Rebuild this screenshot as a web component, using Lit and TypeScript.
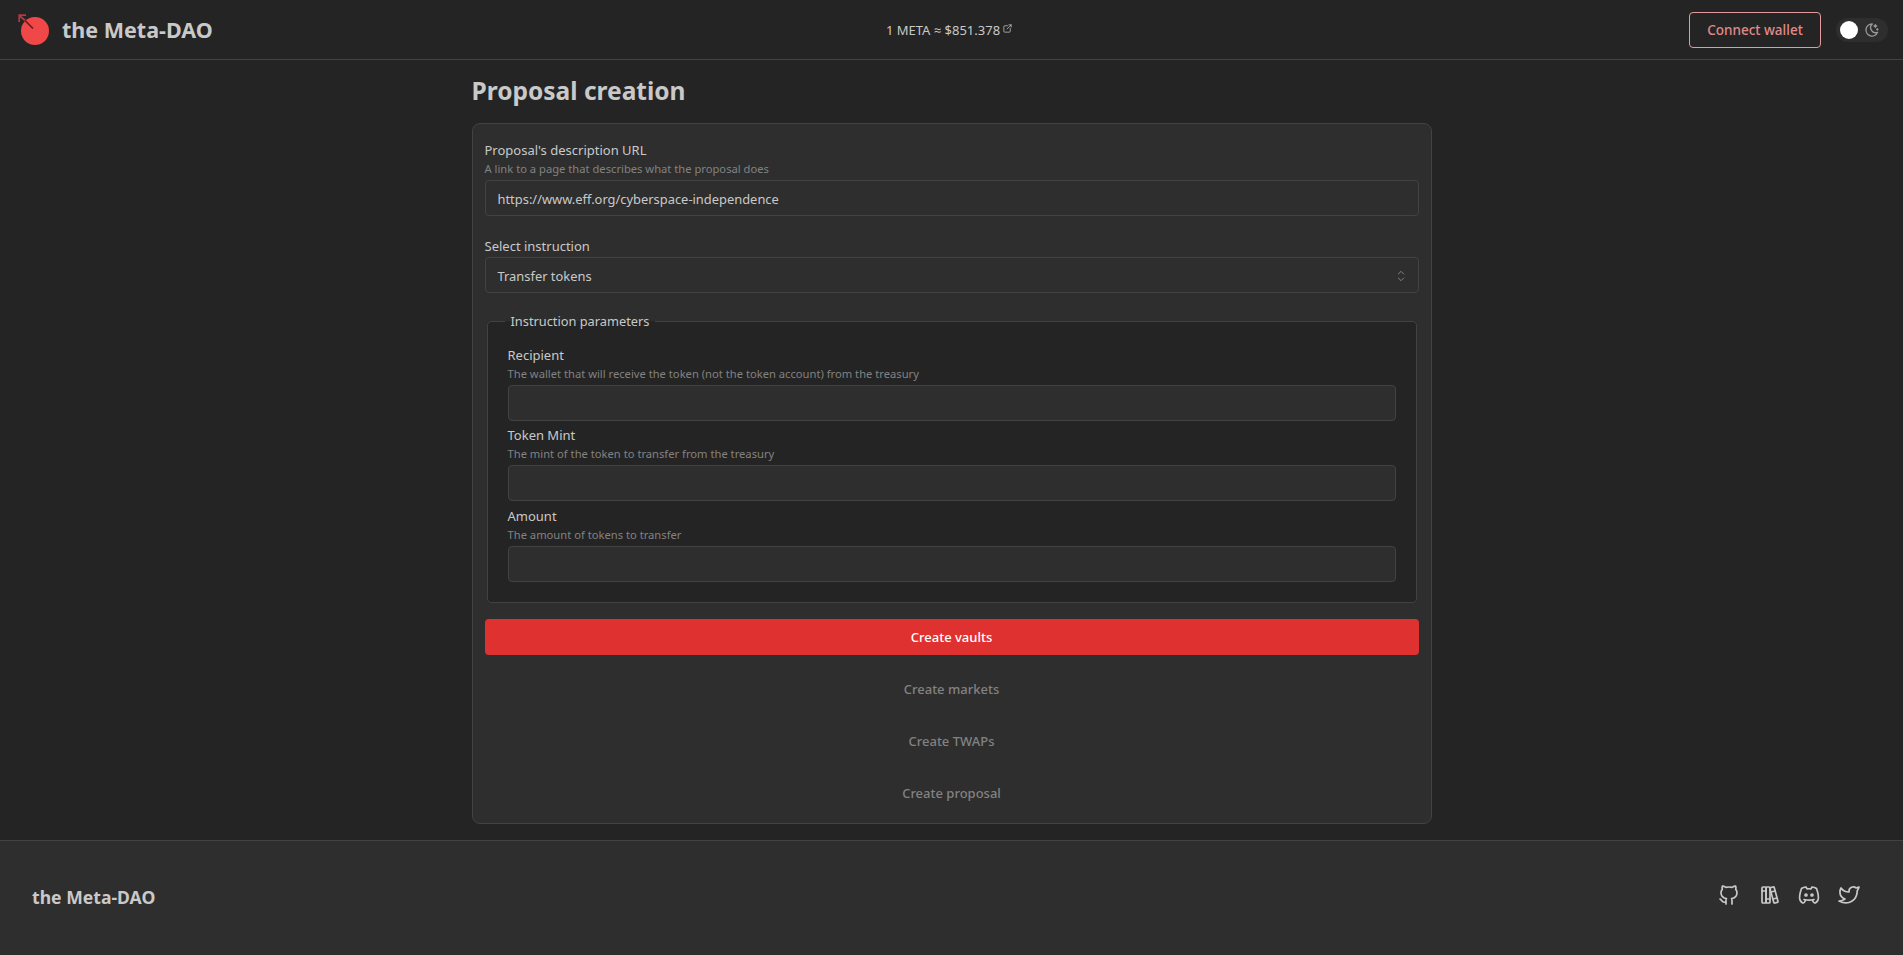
import { LitElement, html, css, svg } from "lit";
import { customElement } from "lit/decorators.js";

const icon = (paths: string[], cls = "icon") => html`<svg class=${cls} viewBox="0 0 24 24" fill="none" stroke="currentColor" stroke-width="2" stroke-linecap="round" stroke-linejoin="round">${paths.map((d) => svg`<path d=${d}></path>`)}</svg>`;

const GITHUB = ["M9 19c-4.3 1.4 -4.3 -2.5 -6 -3m12 5v-3.5c0 -1 .1 -1.4 -.5 -2c2.8 -.3 5.5 -1.4 5.5 -6a4.6 4.6 0 0 0 -1.3 -3.2a4.2 4.2 0 0 0 -.1 -3.2s-1.1 -.3 -3.5 1.3a12.3 12.3 0 0 0 -6.2 0c-2.4 -1.6 -3.5 -1.3 -3.5 -1.3a4.2 4.2 0 0 0 -.1 3.2a4.6 4.6 0 0 0 -1.3 3.2c0 4.6 2.7 5.7 5.5 6c-.6 .6 -.6 1.2 -.5 2v3.5"];
const BOOKS = ["M5 5a1 1 0 0 1 1 -1h2a1 1 0 0 1 1 1v14a1 1 0 0 1 -1 1h-2a1 1 0 0 1 -1 -1z", "M9 5a1 1 0 0 1 1 -1h2a1 1 0 0 1 1 1v14a1 1 0 0 1 -1 1h-2a1 1 0 0 1 -1 -1z", "M5 8h4", "M9 16h4", "M13.803 4.56l2.184 -.53c.562 -.135 1.133 .19 1.282 .732l3.695 13.418a1.02 1.02 0 0 1 -.634 1.219l-.133 .041l-2.184 .53c-.562 .135 -1.133 -.19 -1.282 -.732l-3.695 -13.418a1.02 1.02 0 0 1 .634 -1.219l.133 -.041z", "M14 9l4 -1", "M16 16l3.923 -.98"];
const DISCORD = ["M8 12a1 1 0 1 0 2 0a1 1 0 0 0 -2 0", "M14 12a1 1 0 1 0 2 0a1 1 0 0 0 -2 0", "M15.5 17c0 1 1.5 3 2 3c1.5 0 2.833 -1.667 3.5 -3c.667 -1.667 .5 -5.833 -1.5 -11.5c-1.457 -1.015 -3 -1.34 -4.5 -1.5l-.972 1.923a11.913 11.913 0 0 0 -4.053 0l-.975 -1.923c-1.5 .16 -3.043 .485 -4.5 1.5c-2 5.667 -2.167 9.833 -1.5 11.5c.667 1.333 2 3 3.5 3c.5 0 2 -2 2 -3", "M7 16.5c3.5 1 6.5 1 10 0"];
const TWITTER = ["M22 4.01c-1 .49 -1.98 .689 -3 .99c-1.121 -1.265 -2.783 -1.335 -4.38 -.737s-2.643 2.06 -2.62 3.737v1c-3.245 .083 -6.135 -1.395 -8 -4c0 0 -4.182 7.433 4 11c-1.872 1.247 -3.739 2.088 -6 2c3.308 1.803 6.913 2.423 10.034 1.517c3.58 -1.04 6.522 -3.723 7.651 -7.742a13.84 13.84 0 0 0 .497 -3.753c0 -.249 1.51 -2.772 1.818 -4.013z"];
const MOON = ["M12 3c.132 0 .263 0 .393 0a7.5 7.5 0 0 0 7.92 12.446a9 9 0 1 1 -8.313 -12.454z", "M17 4a2 2 0 0 0 2 2a2 2 0 0 0 -2 2a2 2 0 0 0 -2 -2a2 2 0 0 0 2 -2", "M19 11h2m-1 -1v2"];
const LINK = ["M12 6h-6a2 2 0 0 0 -2 2v10a2 2 0 0 0 2 2h10a2 2 0 0 0 2 -2v-6", "M11 13l9 -9", "M15 4h5v5"];
const SELECTOR = ["M8 9l4 -4l4 4", "M16 15l-4 4l-4 -4"];

@customElement("app-root")
export class AppRoot extends LitElement {
  static styles = css`
    :host { display: block; background: #242424; color: #c9c9c9; font-family: "Noto Sans", "Open Sans", sans-serif; font-size: 13px; }
    * { box-sizing: border-box; }
    header { height: 60px; border-bottom: 1px solid #424242; display: grid; grid-template-columns: 1fr auto 1fr; align-items: center; padding: 0 15px 0 16px; }
    .brand { display: flex; align-items: center; gap: 10px; padding-left: 2px; }
    .logo { width: 34px; height: 34px; display: block; }
    .brand-name { font-size: 21.5px; font-weight: 700; line-height: 1; }
    .price { display: flex; align-items: flex-start; font-size: 13px; line-height: 16px; gap: 2px; padding-right: 5px; }
    .price .icon { width: 11px; height: 11px; margin-top: 1px; stroke-width: 1.6; }
    .actions { display: flex; justify-content: flex-end; align-items: center; gap: 15px; }
    .connect { width: 132px; height: 36px; background: transparent; border: 1px solid #e29a9a; border-radius: 4px; color: #e08a8a; font: 500 13.5px "Noto Sans", sans-serif; }
    .toggle { width: 52px; height: 24px; border-radius: 12px; background: #2e2e2e; display: flex; align-items: center; justify-content: space-between; padding: 0 8px 0 4px; }
    .thumb { width: 18px; height: 18px; border-radius: 50%; background: #fff; }
    .toggle .icon { width: 16px; height: 16px; color: #9a9a9a; }
    main { width: 960px; margin: 0 auto; padding-bottom: 16px; }
    h2 { margin: 0; height: 63px; padding-top: 11px; font-size: 24.5px; line-height: 40px; font-weight: 700; }
    .card { background: #2e2e2e; border: 1px solid #424242; border-radius: 8px; padding: 12px; display: flex; flex-direction: column; gap: 16px; }
    .form { display: flex; flex-direction: column; padding-top: 4px; }
    label { display: block; font-size: 13px; line-height: 20px; }
    .desc { display: block; font-size: 11.2px; line-height: 14px; color: #828282; margin: 2px 0 4px; }
    .input { height: 36px; background: #2e2e2e; border: 1px solid #424242; border-radius: 4px; padding: 1px 9px 0 12px; display: flex; align-items: center; justify-content: space-between; font-size: 12.9px; }
    .select-label { margin: 20px 0 1px; }
    .selector { width: 16px; height: 16px; color: #828282; stroke-width: 1.5; }
    fieldset { margin: 18px 2px 0; padding: 14px 20px 20.4px; border: 1px solid #424242; border-radius: 4px; background: #242424; display: flex; flex-direction: column; gap: 4.3px; min-inline-size: 0; }
    legend { padding: 0 6px; margin-left: -3px; font-size: 12.8px; line-height: 20px; }
    .param { display: flex; flex-direction: column; }
    .btn { height: 36px; border: 0; border-radius: 4px; background: transparent; font: 500 13px "Noto Sans", sans-serif; color: #828282; }
    .btn.primary { background: #e03131; color: #fff; }
    footer { height: 115px; background: #2e2e2e; border-top: 1px solid #424242; display: flex; align-items: center; justify-content: space-between; padding: 0 32px 1px; }
    .foot-name { font-size: 17.6px; font-weight: 700; }
    .socials { display: flex; gap: 16px; margin-right: 10px; padding-bottom: 5px; }
    .socials .icon { display: block; width: 24px; height: 24px; color: #c9c9c9; stroke-width: 1.7; }
  `;

  render() {
    const params = [
      ["Recipient", "The wallet that will receive the token (not the token account) from the treasury"],
      ["Token Mint", "The mint of the token to transfer from the treasury"],
      ["Amount", "The amount of tokens to transfer"],
    ];
    return html`
      <header>
        <div class="brand">
          <svg class="logo" viewBox="0 0 34 34" fill="none">
            <circle cx="17" cy="18" r="14" fill="#f04848"></circle>
            <path d="M1.5 2.5L7 7.5M1.2 9V2.2H8" stroke="#b5393e" stroke-width="1.7"></path>
            <path d="M7 7.5L15 15.5" stroke="#6b1a20" stroke-width="1.7"></path>
          </svg>
          <span class="brand-name">the Meta-DAO</span>
        </div>
        <div class="price"><span>1 META ≈ $851.378</span>${icon(LINK)}</div>
        <div class="actions">
          <button class="connect">Connect wallet</button>
          <div class="toggle"><span class="thumb"></span>${icon(MOON)}</div>
        </div>
      </header>
      <main>
        <h2>Proposal creation</h2>
        <div class="card">
          <div class="form">
            <label>Proposal's description URL</label>
            <span class="desc">A link to a page that describes what the proposal does</span>
            <div class="input">https://www.eff.org/cyberspace-independence</div>
            <label class="select-label">Select instruction</label>
            <div class="input">Transfer tokens ${icon(SELECTOR, "selector")}</div>
            <fieldset>
              <legend>Instruction parameters</legend>
              ${params.map(([l, d]) => html`<div class="param">
                <label>${l}</label>
                <span class="desc">${d}</span>
                <div class="input"></div>
              </div>`)}
            </fieldset>
          </div>
          <button class="btn primary">Create vaults</button>
          <button class="btn">Create markets</button>
          <button class="btn">Create TWAPs</button>
          <button class="btn">Create proposal</button>
        </div>
      </main>
      <footer>
        <span class="foot-name">the Meta-DAO</span>
        <div class="socials">${icon(GITHUB)}${icon(BOOKS)}${icon(DISCORD)}${icon(TWITTER)}</div>
      </footer>
    `;
  }
}
